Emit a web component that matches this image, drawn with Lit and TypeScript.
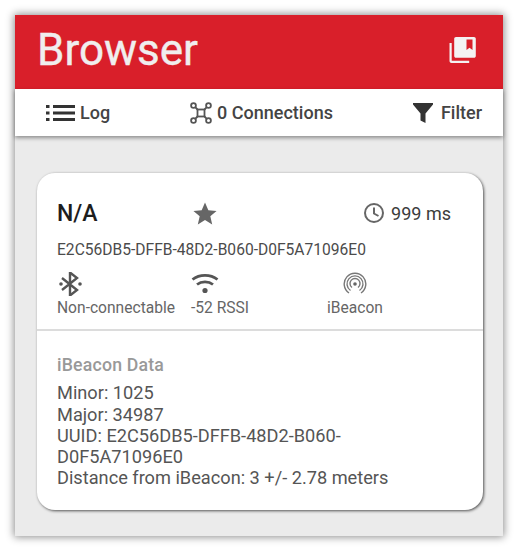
import { LitElement, html, css } from "lit";
import { customElement } from "lit/decorators.js";

@customElement("app-root")
export class AppRoot extends LitElement {
  static styles = css`
    :host { display: block; width: 519px; height: 551px; background: #fff; font-family: Roboto, sans-serif; overflow: hidden; }
    .page { padding: 15px 16px 15px 15px; box-sizing: border-box; height: 551px; }
    .frame { height: 521px; background: #ebebeb; box-shadow: 0 0 8px 1px rgba(0,0,0,.45); display: flex; flex-direction: column; }
    .head { height: 74px; flex: none; background: #d91f2a; color: #f0eeee; display: flex; align-items: center; justify-content: space-between; padding: 0 27px 0 22px; box-sizing: border-box; }
    .title { font-size: 44px; line-height: 70px; font-weight: 400; padding-bottom: 4px; -webkit-text-stroke: .4px #f0eeee; }
    .book { margin-bottom: 4px; }
    .tabs { height: 47px; flex: none; background: #fff; box-shadow: 0 2px 4px rgba(0,0,0,.4); display: flex; align-items: center; justify-content: space-between; padding: 0 21px 0 31px; color: #444; font-size: 18px; position: relative; }
    .tab { display: flex; align-items: center; gap: 4px; font-weight: 500; }
    .conn { gap: 5px; }
    .filter { gap: 8px; }
    .body { flex: 1; padding: 37px 20px 26px 22px; }
    .card { height: 337px; box-sizing: border-box; background: #fff; border-radius: 18px; box-shadow: 1px 1px 3px rgba(0,0,0,.65); display: flex; flex-direction: column; }
    .top { padding: 26px 20px 0; height: 158px; box-sizing: border-box; border-bottom: 2px solid #dcdcdc; flex: none; }
    .row1 { display: grid; grid-template-columns: 135px 1fr auto; align-items: center; height: 28px; }
    .name { font-size: 23px; font-weight: 500; color: #1d1d1d; }
    .star { display: block; }
    .time { display: flex; align-items: center; gap: 6px; font-size: 18px; color: #3c3c3c; padding-right: 12px; }
    .addr { font-size: 15.6px; color: #4b4b4b; margin-top: 14px; line-height: 18px; }
    .stats { display: grid; grid-template-columns: 134px 135px auto; margin-top: 13px; font-size: 15.6px; color: #666; }
    .stat { display: flex; flex-direction: column; align-items: flex-start; gap: 3px; line-height: 18px; }
    .stat svg { height: 24px; display: block; }
    .beacon { align-items: center; justify-self: start; padding-left: 1px; }
    .bottom { padding: 24px 20px 0; color: #555; font-size: 18.2px; line-height: 21.300px; }
    .sub { color: #999; font-weight: 500; margin-bottom: 6px; font-size: 17.7px; letter-spacing: .2px; }
    svg { flex: none; }
  `;

  render() {
    return html`<div class="page"><div class="frame">
      <div class="head">
        <div class="title">Browser</div>
        <svg class="book" width="28" height="28" viewBox="0 0 28 28" fill="#f4f2f2">
          <path d="M1.500 7h2.200v17.500c0 .2.1.3.3.3h17.200V27H3.500c-1.100 0-2-.9-2-2z"/>
          <path fill-rule="evenodd" d="M8 1h18c1 0 1.800.8 1.800 1.800V20c0 1-.8 1.800-1.800 1.800H8c-1 0-1.800-.8-1.800-1.800V2.800C6.200 1.800 7 1 8 1zm10.500 2.400V14l3-2.300 3 2.300V3.400z"/>
        </svg>
      </div>
      <div class="tabs">
        <div class="tab">
          <svg width="30" height="20" viewBox="0 0 30 20" fill="#333">
            <rect x="0" y="2" width="3.500" height="3"/><rect x="0" y="8.500" width="3.500" height="3"/><rect x="0" y="15" width="3.500" height="3"/>
            <rect x="7" y="2" width="22" height="3"/><rect x="7" y="8.500" width="22" height="3"/><rect x="7" y="15" width="22" height="3"/>
          </svg>Log
        </div>
        <div class="tab conn">
          <svg width="22" height="22" viewBox="0 0 22 22" fill="none" stroke="#555" stroke-width="1.800">
            <circle cx="3.500" cy="3.500" r="2.400"/><circle cx="18.500" cy="3.500" r="2.400"/><circle cx="3.500" cy="18.500" r="2.400"/><circle cx="18.500" cy="18.500" r="2.400"/>
            <rect x="7.500" y="7.500" width="7" height="7"/>
            <path d="M5.200 5.200l2.300 2.300M16.800 5.200l-2.300 2.300M5.200 16.800l2.300-2.300M16.800 16.800l-2.300-2.300"/>
          </svg>0 Connections
        </div>
        <div class="tab filter">
          <svg width="20" height="20" viewBox="0 0 20 20" fill="#333"><path d="M0 0h20v1.500l-7.500 9V20l-5-2.500v-7L0 1.500z"/></svg>Filter
        </div>
      </div>
      <div class="body">
        <div class="card">
          <div class="top">
            <div class="row1">
              <div class="name">N/A</div>
              <svg class="star" width="26" height="25" viewBox="0 0 24 24" fill="#666"><path d="M12 1.500l3.200 7.300 7.900.7-6 5.200 1.800 7.800L12 18.300l-6.900 4.200 1.800-7.800-6-5.200 7.900-.7z"/></svg>
              <div class="time">
                <svg width="22" height="22" viewBox="0 0 22 22" fill="none" stroke="#666" stroke-width="2"><circle cx="11" cy="11" r="9"/><path d="M11 5.500V11.500l4.500 2.500"/></svg>999 ms
              </div>
            </div>
            <div class="addr">E2C56DB5-DFFB-48D2-B060-D0F5A71096E0</div>
            <div class="stats">
              <div class="stat">
                <svg width="25" height="24" viewBox="0 0 25 24" fill="none" stroke="#555" stroke-width="2.400">
                  <path d="M5 6l15 12-7 5.500V.5l7 5.500L5 18"/>
                  <circle cx="4" cy="12" r="1.800" fill="#555" stroke="none"/><circle cx="23" cy="12" r="1.800" fill="#555" stroke="none"/>
                </svg>
                Non-connectable
              </div>
              <div class="stat">
                <svg width="28" height="24" viewBox="0 0 28 24" fill="none" stroke="#555" stroke-width="2.800">
                  <path d="M1.500 7.500c7-5.500 18-5.500 25 0"/><path d="M6 12.500c4.500-3.500 11.500-3.500 16 0"/>
                  <circle cx="14" cy="18.500" r="2.600" fill="#555" stroke="none"/>
                </svg>
                -52 RSSI
              </div>
              <div class="stat beacon">
                <svg width="24" height="24" viewBox="0 0 24 24" fill="none" stroke="#777" stroke-width="1.400">
                  <path d="M6 21a10.800 10.800 0 1 1 12 0"/><path d="M7.500 18.500a8 8 0 1 1 9 0"/><path d="M9 15.500a5 5 0 1 1 6 0"/>
                  <circle cx="12" cy="12" r="1.800" fill="#666" stroke="none"/>
                </svg>
                iBeacon
              </div>
            </div>
          </div>
          <div class="bottom">
            <div class="sub">iBeacon Data</div>
            <div>Minor: 1025</div>
            <div>Major: 34987</div>
            <div>UUID: E2C56DB5-DFFB-48D2-B060-<br />D0F5A71096E0</div>
            <div>Distance from iBeacon: 3 +/- 2.78 meters</div>
          </div>
        </div>
      </div>
    </div></div>`;
  }
}
